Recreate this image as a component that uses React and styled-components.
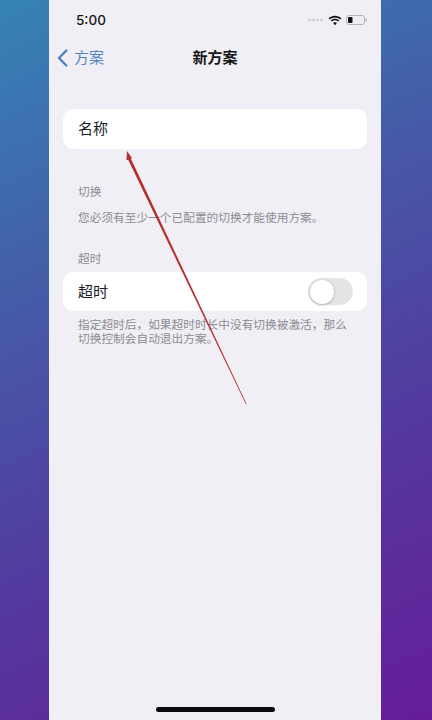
import React from 'react';
import styled, { createGlobalStyle } from 'styled-components';

const GlobalStyle = createGlobalStyle`
  html, body {
    margin: 0;
    padding: 0;
    height: 720px;
    overflow: hidden;
  }
  body {
    font-family: "Liberation Sans", "Noto Sans CJK SC", sans-serif;
  }
`;

const Backdrop = styled.div`
  position: relative;
  width: 432px;
  height: 720px;
  display: flex;
  justify-content: center;
  overflow: hidden;
  background: linear-gradient(155deg, #3583b6 0%, #4659a6 36%, #54379f 68%, #661d98 100%);
`;

const Phone = styled.div`
  width: 332px;
  height: 720px;
  margin-left: -2px;
  display: flex;
  flex-direction: column;
  background: #f0eff5;
`;

const StatusBar = styled.div`
  height: 40px;
  padding: 0 14px 0 27px;
  display: flex;
  align-items: center;
  justify-content: space-between;
`;

const Clock = styled.span`
  font-family: "Inter", sans-serif;
  font-size: 13.5px;
  font-weight: 500;
  color: #161618;
`;

const StatusIcons = styled.div`
  display: flex;
  align-items: center;
  gap: 4px;
`;

const NavBar = styled.div`
  position: relative;
  height: 36px;
  display: flex;
  align-items: center;
  justify-content: center;
`;

const BackLink = styled.div`
  position: absolute;
  left: 8px;
  top: 0;
  height: 100%;
  display: flex;
  align-items: center;
  gap: 6px;
  font-size: 15px;
  color: #5386c1;
`;

const BackLabel = styled.span`
  margin-bottom: 3px;
`;

const NavTitle = styled.div`
  margin-bottom: 3px;
  font-size: 15px;
  font-weight: 700;
  color: #161618;
`;

const Content = styled.div`
  flex: 1;
  padding: 33px 14px 0;
  display: flex;
  flex-direction: column;
`;

const Card = styled.div`
  height: ${(p) => p.$height}px;
  margin-top: ${(p) => p.$top || 0}px;
  padding: 0 14px 0 15px;
  display: flex;
  align-items: center;
  justify-content: space-between;
  background: #fff;
  border-radius: 10px;
  font-size: 15px;
  color: #1c1c1e;
`;

const CardLabel = styled.span`
  margin-bottom: 3px;
`;

const Caption = styled.div`
  margin-top: ${(p) => p.$top}px;
  padding-left: 15px;
  font-size: 11.7px;
  line-height: 14px;
  color: #8c8c91;
`;

const Toggle = styled.div`
  width: 45px;
  height: 27px;
  border-radius: 14px;
  background: #e4e4e6;
  position: relative;
`;

const Knob = styled.div`
  position: absolute;
  top: 1.5px;
  left: 1.5px;
  width: 24px;
  height: 24px;
  border-radius: 50%;
  background: #fff;
  box-shadow: 0 1px 3px rgba(0, 0, 0, 0.25);
`;

const HomeBarWrap = styled.div`
  height: 13px;
  display: flex;
  justify-content: center;
`;

const HomeBar = styled.div`
  width: 119px;
  height: 5px;
  margin-left: 1px;
  border-radius: 3px;
  background: #0b0b0d;
`;

const Annotation = styled.svg`
  position: absolute;
  left: 0;
  top: 0;
  pointer-events: none;
`;

const Wifi = () => (
  <svg width="14" height="11" viewBox="0 0 15 11">
    <path d="M7.5 2.2c2.2 0 4.1.8 5.6 2.2l1.2-1.3C12.5 1.3 10.1.3 7.5.3S2.5 1.3.7 3.1l1.2 1.3C3.4 3 5.3 2.2 7.5 2.2z" fill="#111" />
    <path d="M7.5 5.3c1.3 0 2.4.5 3.3 1.3l1.2-1.3C10.8 4.2 9.2 3.5 7.5 3.5S4.2 4.2 3 5.3l1.2 1.3c.9-.8 2-1.3 3.3-1.3z" fill="#111" />
    <path d="M7.5 10.5l2.1-2.4c-.6-.5-1.3-.8-2.1-.8s-1.5.3-2.1.8z" fill="#111" />
  </svg>
);

const Battery = () => (
  <svg width="21" height="10" viewBox="0 0 21 10">
    <rect x="0.5" y="0.5" width="18" height="9" rx="2.5" fill="none" stroke="#b4b4b8" />
    <rect x="2" y="2" width="4.5" height="6" rx="1" fill="#111" />
    <rect x="19.5" y="3.5" width="1.2" height="3" rx="0.6" fill="#a8a8ac" />
  </svg>
);

const SignalDots = () => (
  <svg width="16" height="4" viewBox="0 0 17 4">
    {[1.5, 5.8, 10.1, 14.4].map((cx) => (
      <circle key={cx} cx={cx} cy="2" r="1.4" fill="#c6c6ca" />
    ))}
  </svg>
);

const App = () => (
  <>
    <GlobalStyle />
    <Backdrop>
      <Phone>
        <StatusBar>
          <Clock>5:00</Clock>
          <StatusIcons>
            <SignalDots />
            <Wifi />
            <Battery />
          </StatusIcons>
        </StatusBar>
        <NavBar>
          <BackLink>
            <svg width="11" height="18" viewBox="0 0 11 18">
              <path d="M9.3 1.5L2 9l7.3 7.5" fill="none" stroke="#4f82c0" strokeWidth="2.4" strokeLinecap="round" strokeLinejoin="round" />
            </svg>
            <BackLabel>方案</BackLabel>
          </BackLink>
          <NavTitle>新方案</NavTitle>
        </NavBar>
        <Content>
          <Card $height={40}>
            <CardLabel>名称</CardLabel>
          </Card>
          <Caption $top={36}>切换</Caption>
          <Caption $top={12}>您必须有至少一个已配置的切换才能使用方案。</Caption>
          <Caption $top={27}>超时</Caption>
          <Card $height={39} $top={6}>
            <CardLabel>超时</CardLabel>
            <Toggle>
              <Knob />
            </Toggle>
          </Card>
          <Caption $top={7}>
            指定超时后，如果超时时长中没有切换被激活，那么
            <br />
            切换控制会自动退出方案。
          </Caption>
        </Content>
        <HomeBarWrap>
          <HomeBar />
        </HomeBarWrap>
      </Phone>
      <Annotation width="432" height="720" viewBox="0 0 432 720">
        <polygon points="127,151 132,158 130.8,158.5 246.6,404 245.8,404 128.3,160 126.5,160" fill="#b62f2a" />
      </Annotation>
    </Backdrop>
  </>
);

export default App;
